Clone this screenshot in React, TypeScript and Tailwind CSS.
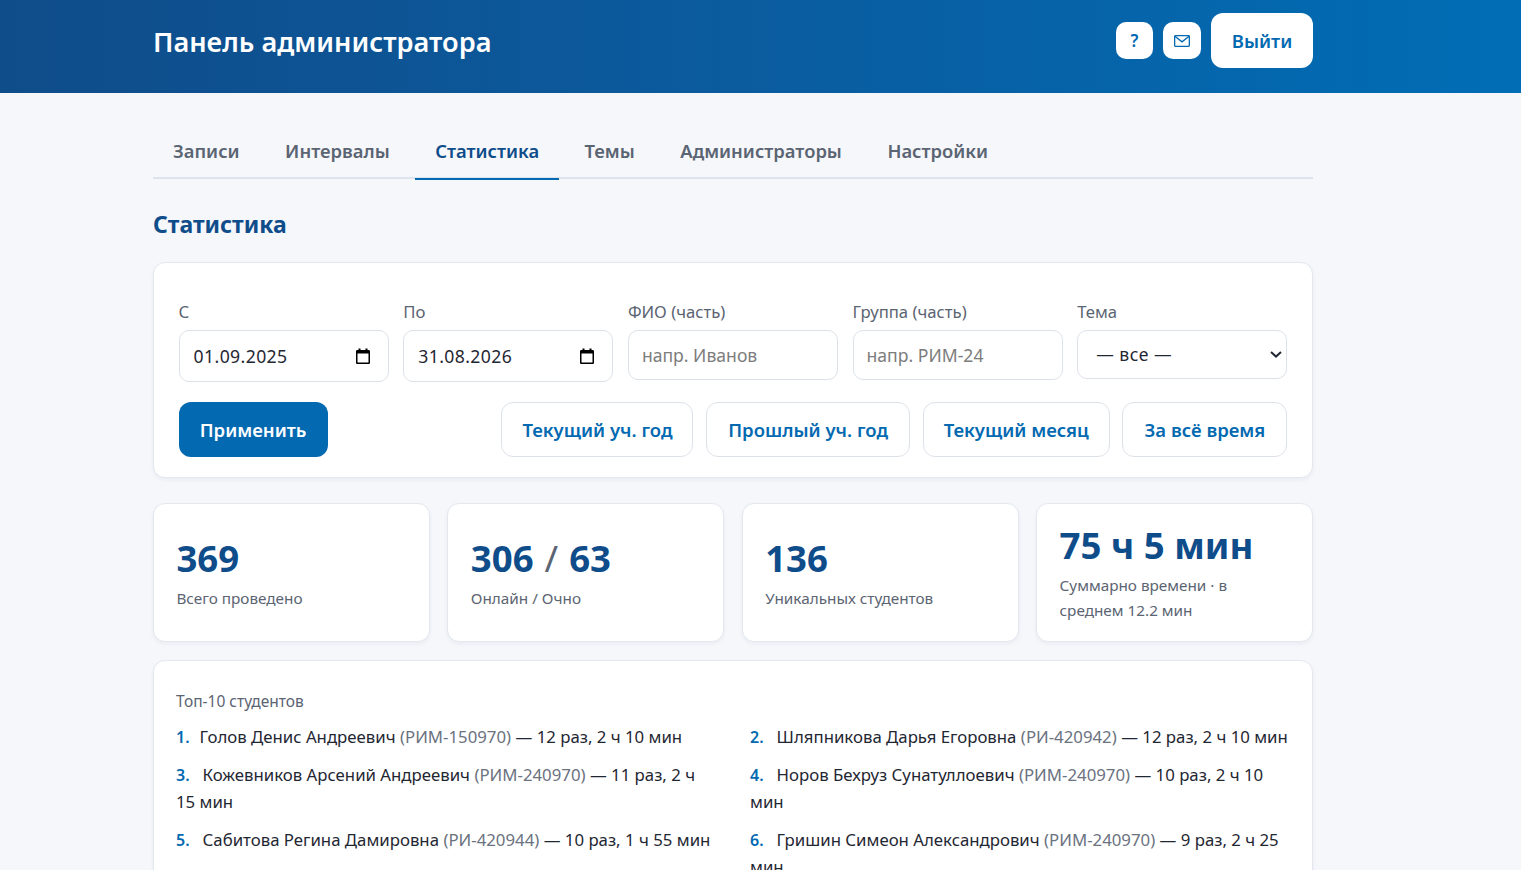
const tabs = ['Записи', 'Интервалы', 'Статистика', 'Темы', 'Администраторы', 'Настройки'];
const presets = [
  { label: 'Текущий уч. год', width: 'w-[192px]' },
  { label: 'Прошлый уч. год', width: 'w-[204px]' },
  { label: 'Текущий месяц', width: 'w-[187px]' },
  { label: 'За всё время', width: 'w-[165px]' },
];

const topStudents = [
  { name: 'Голов Денис Андреевич', group: 'РИМ-150970', rest: '12 раз, 2 ч 10 мин' },
  { name: 'Шляпникова Дарья Егоровна', group: 'РИ-420942', rest: '12 раз, 2 ч 10 мин' },
  { name: 'Кожевников Арсений Андреевич', group: 'РИМ-240970', rest: '11 раз, 2 ч 15 мин' },
  { name: 'Норов Бехруз Сунатуллоевич', group: 'РИМ-240970', rest: '10 раз, 2 ч 10 мин' },
  { name: 'Сабитова Регина Дамировна', group: 'РИ-420944', rest: '10 раз, 1 ч 55 мин' },
  { name: 'Гришин Симеон Александрович', group: 'РИМ-240970', rest: '9 раз, 2 ч 25 мин' },
];

function CalendarIcon() {
  return (
    <svg width="16" height="16" viewBox="0 0 16 16" className="shrink-0 text-black">
      <path
        fill="currentColor"
        d="M3.5 0.5h2v1.5h5V0.5h2V2h1.2C14.4 2 15 2.6 15 3.3v11.4c0 .7-.6 1.3-1.3 1.3H2.3C1.600 16 1 15.400 1 14.700V3.300C1 2.600 1.600 2 2.300 2H3.500V0.500zM2.500 5.500v9h11v-9h-11z"
      />
    </svg>
  );
}

function MailIcon() {
  return (
    <svg width="16" height="12" viewBox="0 0 16 12" fill="none" stroke="currentColor" strokeWidth="1.3">
      <rect x="0.650" y="0.650" width="14.700" height="10.700" rx="0.800" />
      <path d="M0.900 1.200 8 6.800 15.100 1.200" />
    </svg>
  );
}

function FieldLabel({ children }: { children: string }) {
  return <div className="mb-[4px] text-[16.7px] leading-[28px] text-[#5b6472]">{children}</div>;
}

function DateField({ label, value }: { label: string; value: string }) {
  return (
    <div>
      <FieldLabel>{label}</FieldLabel>
      <div className="flex h-[52px] items-center justify-between rounded-[10px] border border-[#dde2ea] bg-white pl-[14px] pr-[17px] text-[17.6px] tracking-[0.4px] text-[#1f2733]">
        <span>{value}</span>
        <CalendarIcon />
      </div>
    </div>
  );
}

function TextField({ label, placeholder }: { label: string; placeholder: string }) {
  return (
    <div>
      <FieldLabel>{label}</FieldLabel>
      <input
        readOnly
        placeholder={placeholder}
        className="h-[50px] w-full rounded-[10px] border border-[#dde2ea] bg-white px-[13px] text-[17.6px] text-[#1f2733] outline-none placeholder:text-[#7d7d7d]"
      />
    </div>
  );
}

function StatCard({ value, label }: { value: React.ReactNode; label: string }) {
  return (
    <div className="flex h-[139px] flex-col justify-center rounded-[12px] border border-[#e3e7ee] bg-white px-[22.4px] shadow-[0_2px_4px_rgba(16,40,80,0.05)]">
      <div className="text-[36.6px] leading-[46px] font-bold text-[#0f4c8a]">{value}</div>
      <div className="mt-[5px] text-[15.3px] leading-[25px] text-[#5b6472]">{label}</div>
    </div>
  );
}

export default function App() {
  return (
    <div className="h-screen overflow-hidden bg-[#f5f7fb] font-['Noto_Sans',sans-serif]">
      <header className="h-[93px] bg-gradient-to-r from-[#0f4c8a] to-[#006db5]">
        <div className="ml-[153px] flex h-[81px] w-[1160px] items-center justify-between">
          <h1 className="mt-[4px] text-[27.2px] font-semibold text-white">Панель администратора</h1>
          <div className="flex items-center gap-[10px]">
            <button className="flex h-[37px] w-[37px] items-center justify-center rounded-[10px] bg-white text-[17px] font-semibold text-[#0369b1]">
              ?
            </button>
            <button className="flex h-[37px] w-[38px] items-center justify-center rounded-[10px] bg-white text-[#0369b1]">
              <MailIcon />
            </button>
            <button className="h-[55px] w-[102px] rounded-[12px] bg-white text-[18.5px] font-semibold text-[#0369b1]">
              Выйти
            </button>
          </div>
        </div>
      </header>

      <main className="ml-[153px] w-[1160px]">
        <nav className="mt-[30px] flex h-[56px] gap-[5.5px] border-b-2 border-[#dde4ef]">
          {tabs.map(t => (
            <div
              key={t}
              className={
                t === 'Статистика'
                  ? 'h-[57px] border-b-2 border-[#0369b1] px-[20px] pt-[14px] text-[18.4px] font-semibold text-[#0f4c8a]'
                  : 'px-[20px] pt-[14px] text-[18.4px] font-semibold text-[#5b6472]'
              }
            >
              {t}
            </div>
          ))}
        </nav>

        <h2 className="mt-[25px] text-[23px] leading-[40px] font-bold text-[#0f4c8a]">Статистика</h2>

        <section className="mt-[18px] h-[216px] rounded-[12px] border border-[#e3e7ee] bg-white px-[24.6px] pt-[35px] shadow-[0_2px_4px_rgba(16,40,80,0.05)]">
          <div className="grid grid-cols-5 items-start gap-[14.4px]">
            <DateField label="С" value="01.09.2025" />
            <DateField label="По" value="31.08.2026" />
            <TextField label="ФИО (часть)" placeholder="напр. Иванов" />
            <TextField label="Группа (часть)" placeholder="напр. РИМ-24" />
            <div>
              <FieldLabel>Тема</FieldLabel>
              <div className="relative">
                <select className="h-[49px] w-full appearance-none rounded-[10px] border border-[#dde2ea] bg-white px-[18px] text-[17.6px] tracking-[0.5px] text-[#1f2733] outline-none">
                  <option>— все —</option>
                </select>
                <svg
                  width="12"
                  height="7"
                  viewBox="0 0 12 7"
                  fill="none"
                  stroke="#1f2733"
                  strokeWidth="2"
                  className="pointer-events-none absolute top-[21px] right-[5px]"
                >
                  <path d="M1 1l5 4.600L11 1" />
                </svg>
              </div>
            </div>
          </div>
          <div className="mt-[20px] flex items-center justify-between">
            <button className="h-[55px] w-[149px] rounded-[12px] bg-[#0369b1] text-[18.5px] font-semibold text-white">
              Применить
            </button>
            <div className="flex gap-[12.67px]">
              {presets.map(p => (
                <button
                  key={p.label}
                  className={`${p.width} h-[55px] rounded-[12px] border border-[#dde2ea] bg-white text-[18.5px] font-semibold text-[#0369b1]`}
                >
                  {p.label}
                </button>
              ))}
            </div>
          </div>
        </section>

        <div className="mt-[25px] grid grid-cols-4 gap-[17.6px]">
          <StatCard value="369" label="Всего проведено" />
          <StatCard
            value={
              <>
                306 <span className="mx-[1.5px] font-normal text-[#5b6472]">/</span> 63
              </>
            }
            label="Онлайн / Очно"
          />
          <StatCard value="136" label="Уникальных студентов" />
          <StatCard value="75 ч 5 мин" label="Суммарно времени · в среднем 12.2 мин" />
        </div>

        <section className="mt-[18px] rounded-[12px] border border-[#e3e7ee] bg-white px-[22px] pt-[28px] pb-[30px] shadow-[0_2px_4px_rgba(16,40,80,0.05)]">
          <div className="text-[15.5px] leading-[25px] text-[#5b6472]">Топ-10 студентов</div>
          <ol className="mt-[9px] grid grid-cols-2 gap-x-[34px] gap-y-[11px] text-[16.8px] leading-[27px] text-[#1f2733]">
            {topStudents.map((s, i) => (
              <li key={s.name}>
                <span
                  className={
                    i === 0
                      ? 'mr-[10px] text-[16px] leading-none font-semibold text-[#0369b1]'
                      : 'mr-[13px] text-[16px] leading-none font-semibold text-[#0369b1]'
                  }
                >
                  {i + 1}.
                </span>
                {s.name} <span className="text-[#6b7280]">({s.group})</span> — {s.rest}
              </li>
            ))}
          </ol>
        </section>
      </main>
    </div>
  );
}
